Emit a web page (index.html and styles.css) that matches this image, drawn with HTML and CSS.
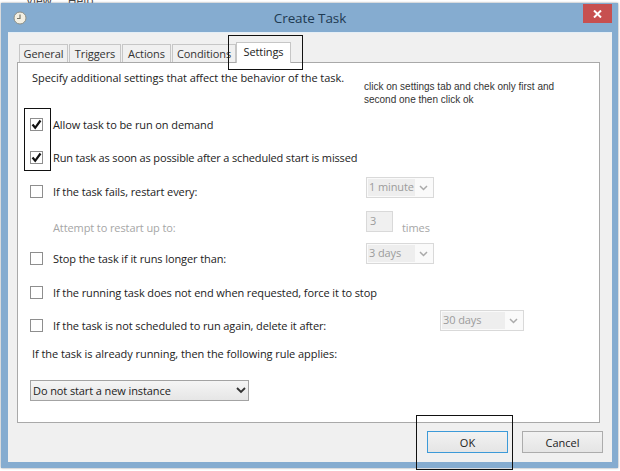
FILE: index.html
```html
<!DOCTYPE html>
<html lang="en">
<head>
  <meta charset="UTF-8">
  <meta name="viewport" content="width=device-width, initial-scale=1.0">
  <title>Create Task</title>
  <link rel="stylesheet" href="styles.css">
</head>
<body>
  <div class="menu-behind"><span>View</span><span>Help</span></div>

  <div class="window">
    <header class="titlebar">
      <svg class="clock" width="14" height="14" viewBox="0 0 14 14">
        <circle cx="7" cy="7" r="6" fill="#f3efe2" stroke="#8d8f86"/>
        <path d="M7 3.5V7.5H4" fill="none" stroke="#77766a" stroke-width="1.2"/>
      </svg>
      <h1>Create Task</h1>
      <div class="close">
        <svg width="9" height="8" viewBox="0 0 9 8"><path d="M1 .5L8 7.5M8 .5L1 7.5" stroke="#fff" stroke-width="2"/></svg>
      </div>
    </header>

    <div class="client">
      <nav class="tabs">
        <div class="tab tab-general">General</div>
        <div class="tab tab-triggers">Triggers</div>
        <div class="tab tab-actions">Actions</div>
        <div class="tab tab-conditions">Conditions</div>
        <div class="tab tab-settings">Settings</div>
      </nav>

      <main class="panel">
        <div class="row intro">Specify additional settings that affect the behavior of the task.</div>
        <p class="note">click on settings tab and chek only first and second one then click ok</p>

        <div class="row row-allow">
          <span class="check"><svg width="11" height="11" viewBox="0 0 11 11"><path d="M1.5 5.5L4.2 8.8L9.5 1.5" fill="none" stroke="#111" stroke-width="2.2"/></svg></span>
          <label>Allow task to be run on demand</label>
        </div>
        <div class="row row-run">
          <span class="check"><svg width="11" height="11" viewBox="0 0 11 11"><path d="M1.5 5.5L4.2 8.8L9.5 1.5" fill="none" stroke="#111" stroke-width="2.2"/></svg></span>
          <label class="tight">Run task as soon as possible after a scheduled start is missed</label>
        </div>

        <div class="row-tall row-fails">
          <div class="row"><span class="check"></span><label>If the task fails, restart every:</label></div>
          <div class="combo combo-small"><span class="value">1 minute</span><svg width="9" height="6" viewBox="0 0 9 6"><path d="M1 1L4.5 4.5L8 1" fill="none" stroke="#aaa" stroke-width="1.5"/></svg></div>
        </div>
        <div class="row-tall row-attempt">
          <div class="row"><span class="no-check"></span><label class="disabled">Attempt to restart up to:</label></div>
          <div class="spin">3</div>
          <div class="row times disabled">times</div>
        </div>
        <div class="row-tall row-stop">
          <div class="row"><span class="check"></span><label>Stop the task if it runs longer than:</label></div>
          <div class="combo combo-small"><span class="value">3 days</span><svg width="9" height="6" viewBox="0 0 9 6"><path d="M1 1L4.5 4.5L8 1" fill="none" stroke="#aaa" stroke-width="1.5"/></svg></div>
        </div>

        <div class="row row-force">
          <span class="check"></span>
          <label>If the running task does not end when requested, force it to stop</label>
        </div>
        <div class="row-tall row-delete">
          <div class="row"><span class="check"></span><label>If the task is not scheduled to run again, delete it after:</label></div>
          <div class="combo combo-wide"><span class="value">30 days</span><svg width="9" height="6" viewBox="0 0 9 6"><path d="M1 1L4.5 4.5L8 1" fill="none" stroke="#aaa" stroke-width="1.5"/></svg></div>
        </div>

        <div class="row intro row-already">If the task is already running, then the following rule applies:</div>
        <div class="rule-select">
          <span>Do not start a new instance</span>
          <svg width="10" height="7" viewBox="0 0 10 7"><path d="M1 1L5 5L9 1" fill="none" stroke="#333" stroke-width="1.8"/></svg>
        </div>
      </main>

      <footer class="buttons">
        <button class="btn btn-default">OK</button>
        <button class="btn">Cancel</button>
      </footer>
    </div>
  </div>

  <!-- boxes drawn over the screenshot -->
  <div class="mark mark-tab"></div>
  <div class="mark mark-checks"></div>
  <div class="mark mark-ok"></div>
</body>
</html>
```

FILE: styles.css
```css
body {
  margin: 0;
  height: 471px;
  overflow: hidden;
  background: #fff;
  font-family: "Open Sans", sans-serif;
  font-size: 11px;
  letter-spacing: -0.1px;
  color: #222;
}

/* menu of the window behind, only the bottom of it shows */
.menu-behind {
  position: absolute;
  top: -8px;
  left: 26px;
  display: flex;
  gap: 16px;
  font-size: 12px;
  color: #444;
}

.window {
  position: relative;
  margin: 3px 2px 0 1px;
  height: 465px;
  padding: 0 6px 6px 7px;
  box-sizing: border-box;
  display: flex;
  flex-direction: column;
  background: #85acd0;
  box-shadow: 0 0 2px #8a9096;
}

.titlebar {
  height: 29px;
  flex: none;
  display: flex;
  align-items: center;
  justify-content: center;
  position: relative;
}

.titlebar h1 {
  margin: 0;
  font-size: 13.5px;
  font-weight: 400;
  color: #1e3a52;
}

.clock {
  position: absolute;
  left: 5px;
  top: 8px;
}

.close {
  position: absolute;
  right: 0;
  top: 1px;
  width: 29px;
  height: 19px;
  background: #c75050;
  display: flex;
  align-items: center;
  justify-content: center;
}

.client {
  flex: 1;
  display: flex;
  flex-direction: column;
  background: #f0f0f0;
  border-top: 1px solid #e4eef6;
}

.tabs {
  height: 29px;
  padding-left: 11px;
  box-sizing: border-box;
  display: flex;
  align-items: flex-end;
}

.tab {
  height: 18px;
  box-sizing: border-box;
  border: 1px solid #c6c6c6;
  border-bottom: none;
  background: #f0f0f0;
  text-align: center;
  line-height: 17px;
  margin-right: 1px;
  color: #333;
}

.tab-general { width: 49px; }
.tab-triggers { width: 52px; }
.tab-actions { width: 49px; }
.tab-conditions { width: 64px; margin-right: 0; }

.tab-settings {
  width: 55px;
  height: 21px;
  line-height: 18px;
  background: #fff;
  margin-bottom: -1px;
  position: relative;
  z-index: 1;
  color: #222;
}

.panel {
  position: relative;
  height: 361px;
  margin: 0 12px 0 9px;
  padding-top: 4px;
  box-sizing: border-box;
  flex: none;
  background: #fff;
  border: 1px solid #a9a9a9;
}

.row {
  height: 20px;
  display: flex;
  align-items: center;
}

.row-tall {
  display: flex;
  align-items: flex-start;
  justify-content: space-between;
}

.row-tall > .row {
  align-self: flex-end;
}

.intro {
  padding-left: 14px;
  letter-spacing: -0.06px;
}

.tight { letter-spacing: -0.16px; }

.check, .no-check {
  width: 11px;
  height: 11px;
  margin: 0 10px 0 12px;
  flex: none;
  display: flex;
  align-items: center;
  justify-content: center;
}

.check {
  border: 1px solid #8e8e8e;
  background: #fff;
}

.no-check { margin-right: 12px; }

.disabled { color: #a6a6a6; }

.note {
  position: absolute;
  left: 346px;
  top: 17px;
  width: 200px;
  margin: 0;
  font-family: "Liberation Sans", sans-serif;
  font-size: 10px;
  letter-spacing: 0;
  line-height: 13px;
  color: #333;
}

.row-allow { margin-top: 27px; }
.row-run { margin-top: 13px; }
.row-fails { margin-top: 10px; height: 24px; width: 416px; }
.row-attempt { margin-top: 10px; height: 26px; width: 416px; justify-content: flex-start; }
.row-stop { margin-top: 6px; height: 25px; width: 416px; }
.row-force { margin-top: 14px; }
.row-delete { margin-top: 8px; height: 25px; width: 506px; }
.row-already { margin-top: 8px; }

.combo {
  height: 21px;
  box-sizing: border-box;
  border: 1px solid #d9d9d9;
  background: #fafafa;
  display: flex;
  align-items: center;
  justify-content: space-between;
  padding: 1px 5px 1px 1px;
  color: #9c9c9c;
}

.combo-small { width: 68px; }
.combo-wide { width: 84px; }

.combo .value {
  height: 100%;
  flex: 1;
  margin-right: 4px;
  padding-left: 1px;
  line-height: 16px;
  white-space: nowrap;
  background: #eeeeee;
}

.spin {
  width: 27px;
  height: 21px;
  box-sizing: border-box;
  position: absolute;
  left: 348px;
  border: 1px solid #d9d9d9;
  background: #f0f0f0;
  padding-left: 3px;
  line-height: 17px;
  color: #9c9c9c;
}

.times {
  position: absolute;
  left: 384px;
  margin-top: 6px;
}

.rule-select {
  width: 219px;
  height: 21px;
  box-sizing: border-box;
  margin: 17px 0 0 12px;
  padding: 0 2px 0 2px;
  border: 1px solid #a3a3a3;
  background: linear-gradient(#f5f5f5, #e6e6e6);
  display: flex;
  align-items: center;
  justify-content: space-between;
}

.buttons {
  flex: 1;
  display: flex;
  justify-content: flex-end;
  gap: 14px;
  padding: 8px 9px 0 0;
}

.btn {
  width: 81px;
  height: 22px;
  box-sizing: border-box;
  padding: 0;
  border: 1px solid #acacac;
  background: linear-gradient(#f2f2f2, #e5e5e5);
  font-family: inherit;
  font-size: 11px;
  color: #222;
}

.btn-default { border-color: #3c9ad8; }

.mark {
  position: absolute;
  box-sizing: border-box;
  border: 1px solid #111;
}

.mark-tab { left: 228px; top: 35px; width: 75px; height: 35px; }
.mark-checks { left: 24px; top: 108px; width: 27px; height: 63px; }
.mark-ok { left: 416px; top: 415px; width: 97px; height: 55px; }
```
